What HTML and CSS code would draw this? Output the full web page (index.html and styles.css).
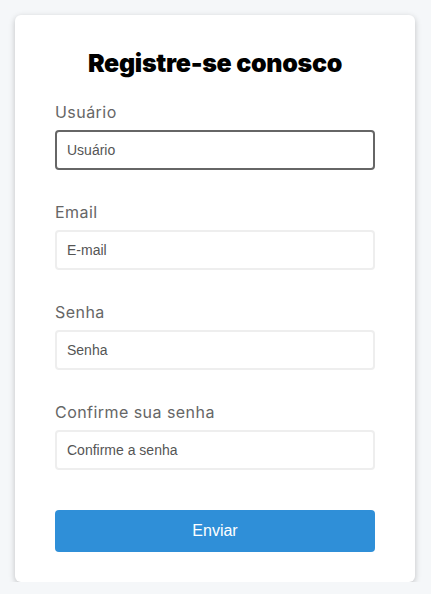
FILE: index.html
```html
<!DOCTYPE html>
<html lang="pt-BR">
<head>
<meta charset="utf-8">
<title>Registre-se conosco</title>
<link rel="stylesheet" href="styles.css">
</head>
<body>
<main class="card">
  <h1 class="title">Registre-se conosco</h1>
  <form class="form">
    <div class="field">
      <label class="label" for="user">Usuário</label>
      <input class="input input-focus" id="user" type="text" placeholder="Usuário">
    </div>
    <div class="field">
      <label class="label" for="email">Email</label>
      <input class="input" id="email" type="email" placeholder="E-mail">
    </div>
    <div class="field">
      <label class="label" for="pass">Senha</label>
      <input class="input" id="pass" type="password" placeholder="Senha">
    </div>
    <div class="field">
      <label class="label" for="pass2">Confirme sua senha</label>
      <input class="input" id="pass2" type="password" placeholder="Confirme a senha">
    </div>
    <button class="button" type="button">Enviar</button>
  </form>
</main>
</body>
</html>
```
FILE: styles.css
```css
html, body {
  margin: 0;
  padding: 0;
}
body {
  background: #f5f7f9;
  font-family: "Inter", "Liberation Sans", sans-serif;
  padding: 15px 0 0 15px;
}
.card {
  box-sizing: border-box;
  width: 400px;
  background: #fff;
  border-radius: 6px;
  box-shadow: 0 2px 6px rgba(0, 0, 0, 0.22);
  padding: 30px 40px 30px;
}
.title {
  margin: 0 0 20px;
  text-align: center;
  font-size: 25px;
  line-height: 36px;
  font-weight: 900;
  letter-spacing: -0.3px;
  color: #000;
}
.form {
  display: flex;
  flex-direction: column;
}
.field {
  display: flex;
  flex-direction: column;
  gap: 7px;
  margin-bottom: 31px;
}
.field:nth-last-of-type(1) {
  margin-bottom: 40px;
}
.label {
  display: block;
  height: 22px;
  font-size: 16px;
  line-height: 22px;
  letter-spacing: 0.45px;
  color: #666;
  font-weight: 400;
}
.input {
  box-sizing: border-box;
  display: block;
  height: 40px;
  width: 100%;
  margin: 0;
  border: 2px solid #eeeeee;
  border-radius: 4px;
  padding: 0 10px;
  font-family: "Liberation Sans", Arial, sans-serif;
  font-size: 14px;
  color: #333;
  outline: none;
  background: #fff;
}
.input::placeholder {
  color: #555;
}
.input-focus {
  border-color: #666;
}
.button {
  display: block;
  height: 42px;
  margin: 0;
  border: none;
  border-radius: 4px;
  background: #2f8fd8;
  color: #fff;
  font-family: "Liberation Sans", Arial, sans-serif;
  font-size: 16px;
  cursor: pointer;
}
```
